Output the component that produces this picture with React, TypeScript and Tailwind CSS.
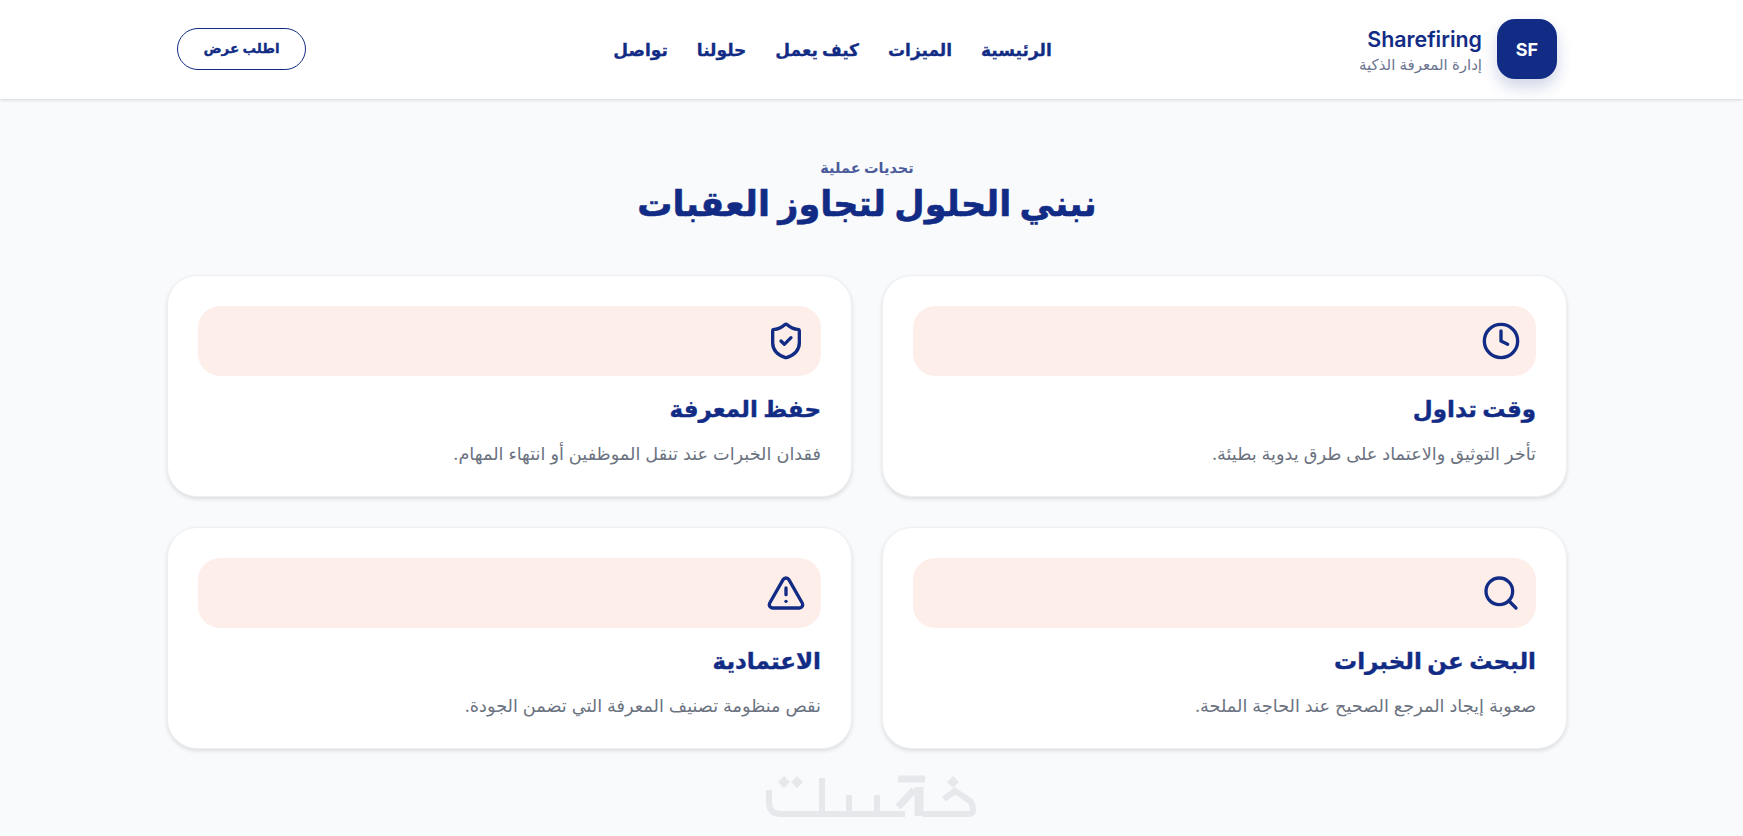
import { Clock, ShieldCheck, Search, TriangleAlert } from "lucide-react";

const cards = [
  { icon: Clock, title: "وقت تداول", text: "تأخر التوثيق والاعتماد على طرق يدوية بطيئة." },
  { icon: ShieldCheck, title: "حفظ المعرفة", text: "فقدان الخبرات عند تنقل الموظفين أو انتهاء المهام." },
  { icon: Search, title: "البحث عن الخبرات", text: "صعوبة إيجاد المرجع الصحيح عند الحاجة الملحة." },
  { icon: TriangleAlert, title: "الاعتمادية", text: "نقص منظومة تصنيف المعرفة التي تضمن الجودة." },
];
const nav = ["الرئيسية", "الميزات", "كيف يعمل", "حلولنا", "تواصل"];

function Watermark() {
  return (
    <svg width="212" height="44" viewBox="0 0 212 44" fill="none" stroke="#e6e8eb" strokeWidth="6" className="block">
      <path d="M4 15v12q0 12 12 12h124" />
      <path d="M57 3v37" />
      <path d="M84 20v20" />
      <path d="M112 20v20" />
      <path d="M133 4h27" strokeWidth="7" />
      <path d="M154 12v29" strokeWidth="9" />
      <path d="M133 32l16-17" strokeWidth="7" />
      <path d="M158 39h46q4 0 4-4 0-8-6-11l-12-8-11 8" />
      <path d="M188 1l6 6-6 6-6-6z" fill="#e6e8eb" stroke="none" />
      <path d="M19 1l6 6-6 6-6-6z M32 1l6 6-6 6-6-6z" fill="#e6e8eb" stroke="none" />
    </svg>
  );
}

export default function App() {
  return (
    <div dir="rtl" className="min-h-[836px] bg-[#f9fafc] font-['Inter','DejaVu_Sans',sans-serif] pr-[9px]">
      <header className="h-[99px] bg-white shadow-[0_1px_3px_rgba(0,0,0,0.15)] -mr-[9px] pr-[9px]">
        <div className="mx-auto flex h-full w-[1400px] items-center justify-between px-[10px]">
          <div className="flex items-center gap-[15px]">
            <div className="-mt-px flex h-[60px] w-[60px] items-center justify-center rounded-[18px] bg-[#122c85] text-[18px] font-bold text-white shadow-[0_8px_16px_rgba(18,44,133,0.2)]">SF</div>
            <div className="flex flex-col items-start">
              <div className="text-[21.4px] font-semibold leading-[28px] text-[#122c85]">Sharefiring</div>
              <div className="mt-[2px] text-[15px] leading-[20px] text-[#6b7490]">إدارة المعرفة الذكية</div>
            </div>
          </div>
          <nav className="flex items-center gap-[29px] pt-[3px]">
            {nav.map((n) => (
              <span key={n} className="text-[17px] font-bold text-[#122c85] [-webkit-text-stroke:0.3px_#122c85]">{n}</span>
            ))}
          </nav>
          <button className="-mt-[2px] h-[42px] w-[129px] rounded-full border border-[#122c85] bg-white text-[13.5px] font-bold text-[#122c85] [-webkit-text-stroke:0.3px_#122c85]">اطلب عرض</button>
        </div>
      </header>
      <main className="mx-auto w-[1400px] pt-[60px]">
        <div className="text-center">
          <div className="text-[14.5px] font-bold leading-[18px] text-[#4a5a9a]">تحديات عملية</div>
          <h1 className="mt-[2px] text-[35px] font-bold leading-[48px] text-[#122c85] [-webkit-text-stroke:0.6px_#122c85]">نبني الحلول لتجاوز العقبات</h1>
        </div>
        <div className="mt-[48px] grid grid-cols-2 gap-[30px]">
          {cards.map((c) => (
            <div key={c.title} className="h-[222px] rounded-[30px] border border-[#eef0f3] bg-white p-[30px] shadow-[0_2px_4px_rgba(0,0,0,0.12)]">
              <div className="flex h-[70px] items-center rounded-[22px] bg-[#fdeeea] pr-[15px]">
                <c.icon size={40} strokeWidth={2} className="text-[#122c85]" />
              </div>
              <h3 className="mt-[16px] text-[23px] font-bold leading-[34px] text-[#122c85] [-webkit-text-stroke:0.4px_#122c85]">{c.title}</h3>
              <p className="mt-[16px] text-[17.7px] leading-[24px] text-[#6b7280]">{c.text}</p>
            </div>
          ))}
        </div>
        <div className="mt-[26px] flex justify-center pl-[8px]"><Watermark /></div>
      </main>
    </div>
  );
}
